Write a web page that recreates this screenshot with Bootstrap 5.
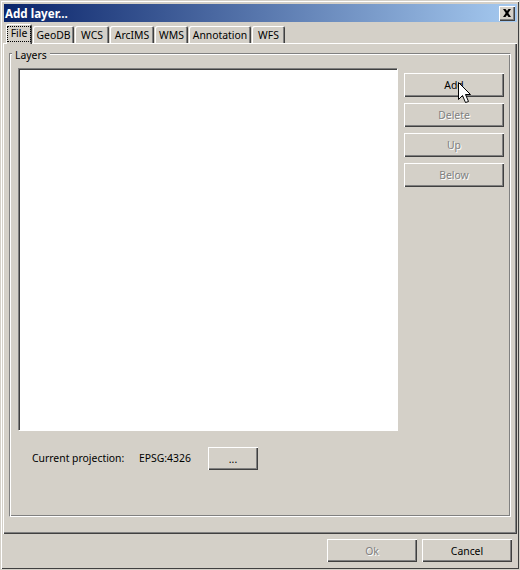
<!DOCTYPE html>
<html lang="en">
<head>
    <meta charset="UTF-8">
    <meta name="viewport" content="width=device-width, initial-scale=1.0">
    <title>Add layer...</title>
    <link rel="stylesheet" href="https://cdn.jsdelivr.net/npm/bootstrap@5.3.0/dist/css/bootstrap.min.css">
    <script src="https://cdn.jsdelivr.net/npm/bootstrap@5.3.0/dist/js/bootstrap.bundle.min.js"></script>
    <style>
        html, body { height: 570px; overflow: hidden; }
        body { font-family: "Noto Sans", sans-serif; font-size: 10.4px; line-height: 13px; color: #000; background: #d4d0c8; }
        .win { height: 570px; padding: 4px 3px 3px 3px; background: #d4d0c8; box-shadow: inset 1px 1px 0 #d4d0c8, inset -1px -1px 0 #d4d0c8, inset 2px 2px 0 #fff, inset -2px -2px 0 #404040; }
        .titlebar { height: 18px; flex: none; margin-left: 1px; padding: 0 2px 0 1px; color: #fff; font-weight: 700; font-size: 11.6px; background: linear-gradient(90deg, #0a246a, #a6caf0); }
        .close-x { width: 16px; height: 15px; padding: 0; background: #d4d0c8; border: 0; box-shadow: inset 1px 1px 0 #fff, inset -1px -1px 0 #404040, inset -2px -2px 0 #808080; }
        .win-tabs { height: 21px; flex: none; padding: 0 0 0 3px; border: 0; gap: 1px; align-items: flex-end; position: relative; z-index: 1; }
        .win-tabs .nav-link { height: 17px; padding: 3px 0 0; margin: 0; text-align: center; color: #000; background: #d4d0c8; border: 0; border-radius: 2px 2px 0 0; box-shadow: inset 1px 1px 0 #fff, inset -1px 0 0 #404040, inset -2px 0 0 #808080; }
        .win-tabs .nav-link.active { height: 20px; margin: 0 0 -1px; padding: 2px 1px 0; color: #000; background: #d4d0c8; border: 0; }
        .tab-focus { display: block; height: 16px; padding-top: 1px; outline: 1px dotted #000; outline-offset: -1px; }
        .tab-w1 { width: 26px; } .tab-w2 { width: 41px; } .tab-w3 { width: 34px; } .tab-w4 { width: 44px; }
        .tab-w5 { width: 33px; } .tab-w6 { width: 62px; } .tab-w7 { width: 33px; }
        .win-pane { padding: 10px 6px 0 6px; box-shadow: inset 1px 1px 0 #fff, inset -1px -1px 0 #404040, inset -2px -2px 0 #808080; }
        .group-box { position: relative; height: 464px; padding: 14px 6px 0 8px; border: 1px solid #808080; border-right-color: #fff; border-bottom-color: #fff; box-shadow: inset 1px 1px 0 #fff, inset -1px -1px 0 #808080; }
        .group-label { position: absolute; left: 2px; top: -5px; padding: 0 3px; background: #d4d0c8; }
        .list-area { width: 379px; height: 362px; flex: none; background: #fff; box-shadow: inset 1px 1px 0 #808080, inset 2px 2px 0 #404040, 1px 1px 0 #fff; }
        .side-btns { padding: 5px 0 0 7px; gap: 6px; }
        .win-btn { width: 100px; height: 24px; padding: 1px 0 0; font-size: inherit; line-height: 1; color: #000; background: #d4d0c8; border: 0; border-radius: 0; box-shadow: inset 1px 1px 0 #fff, inset -1px -1px 0 #404040, inset -2px -2px 0 #808080; }
        .win-btn:disabled { opacity: 1; color: #808080; background: #d4d0c8; text-shadow: 1px 1px 0 #fff; }
        .dots-btn { width: 50px; height: 23px; }
        .ok-btn { width: 90px; height: 23px; }
        .proj-row { padding: 17px 0 0 14px; }
        .proj-name { width: 107px; }
        .proj-code { width: 69px; }
        .win-foot { height: 33px; flex: none; padding: 5px 5px 0 0; gap: 5px; }
        .arrow { position: absolute; left: 54px; top: 9px; }
        .cursor-wrap { position: relative; }
    </style>
</head>
<body>
    <div class="win d-flex flex-column">
        <div class="titlebar d-flex align-items-center justify-content-between">
            <span>Add layer...</span>
            <button class="close-x d-flex align-items-center justify-content-center" type="button">
                <svg width="8" height="8" viewBox="0 0 8 8"><path d="M0 0h2.500L4 2l1.500-2H8L5.300 4 8 8H5.500L4 6 2.500 8H0l2.700-4z" fill="#000"/></svg>
            </button>
        </div>
        <ul class="nav nav-tabs win-tabs">
            <li class="nav-item"><a class="nav-link active tab-w1" href="#"><span class="tab-focus">File</span></a></li>
            <li class="nav-item"><a class="nav-link tab-w2" href="#">GeoDB</a></li>
            <li class="nav-item"><a class="nav-link tab-w3" href="#">WCS</a></li>
            <li class="nav-item"><a class="nav-link tab-w4" href="#">ArcIMS</a></li>
            <li class="nav-item"><a class="nav-link tab-w5" href="#">WMS</a></li>
            <li class="nav-item"><a class="nav-link tab-w6" href="#">Annotation</a></li>
            <li class="nav-item"><a class="nav-link tab-w7" href="#">WFS</a></li>
        </ul>
        <div class="win-pane flex-grow-1">
            <div class="group-box">
                <span class="group-label">Layers</span>
                <div class="d-flex">
                    <div class="list-area"></div>
                    <div class="side-btns d-flex flex-column">
                        <div class="cursor-wrap">
                            <button class="btn win-btn" type="button">Add</button>
                            <svg class="arrow" width="13" height="22" viewBox="0 0 13 22"><path d="M.5.500v17l4-4 3 7 3-1-3-7h5z" fill="#fff" stroke="#000"/></svg>
                        </div>
                        <button class="btn win-btn" type="button" disabled>Delete</button>
                        <button class="btn win-btn" type="button" disabled>Up</button>
                        <button class="btn win-btn" type="button" disabled>Below</button>
                    </div>
                </div>
                <div class="proj-row d-flex align-items-center">
                    <span class="proj-name">Current projection:</span>
                    <span class="proj-code">EPSG:4326</span>
                    <button class="btn win-btn dots-btn" type="button">...</button>
                </div>
            </div>
        </div>
        <div class="win-foot d-flex justify-content-end">
            <button class="btn win-btn ok-btn" type="button" disabled>Ok</button>
            <button class="btn win-btn ok-btn" type="button">Cancel</button>
        </div>
    </div>
</body>
</html>
